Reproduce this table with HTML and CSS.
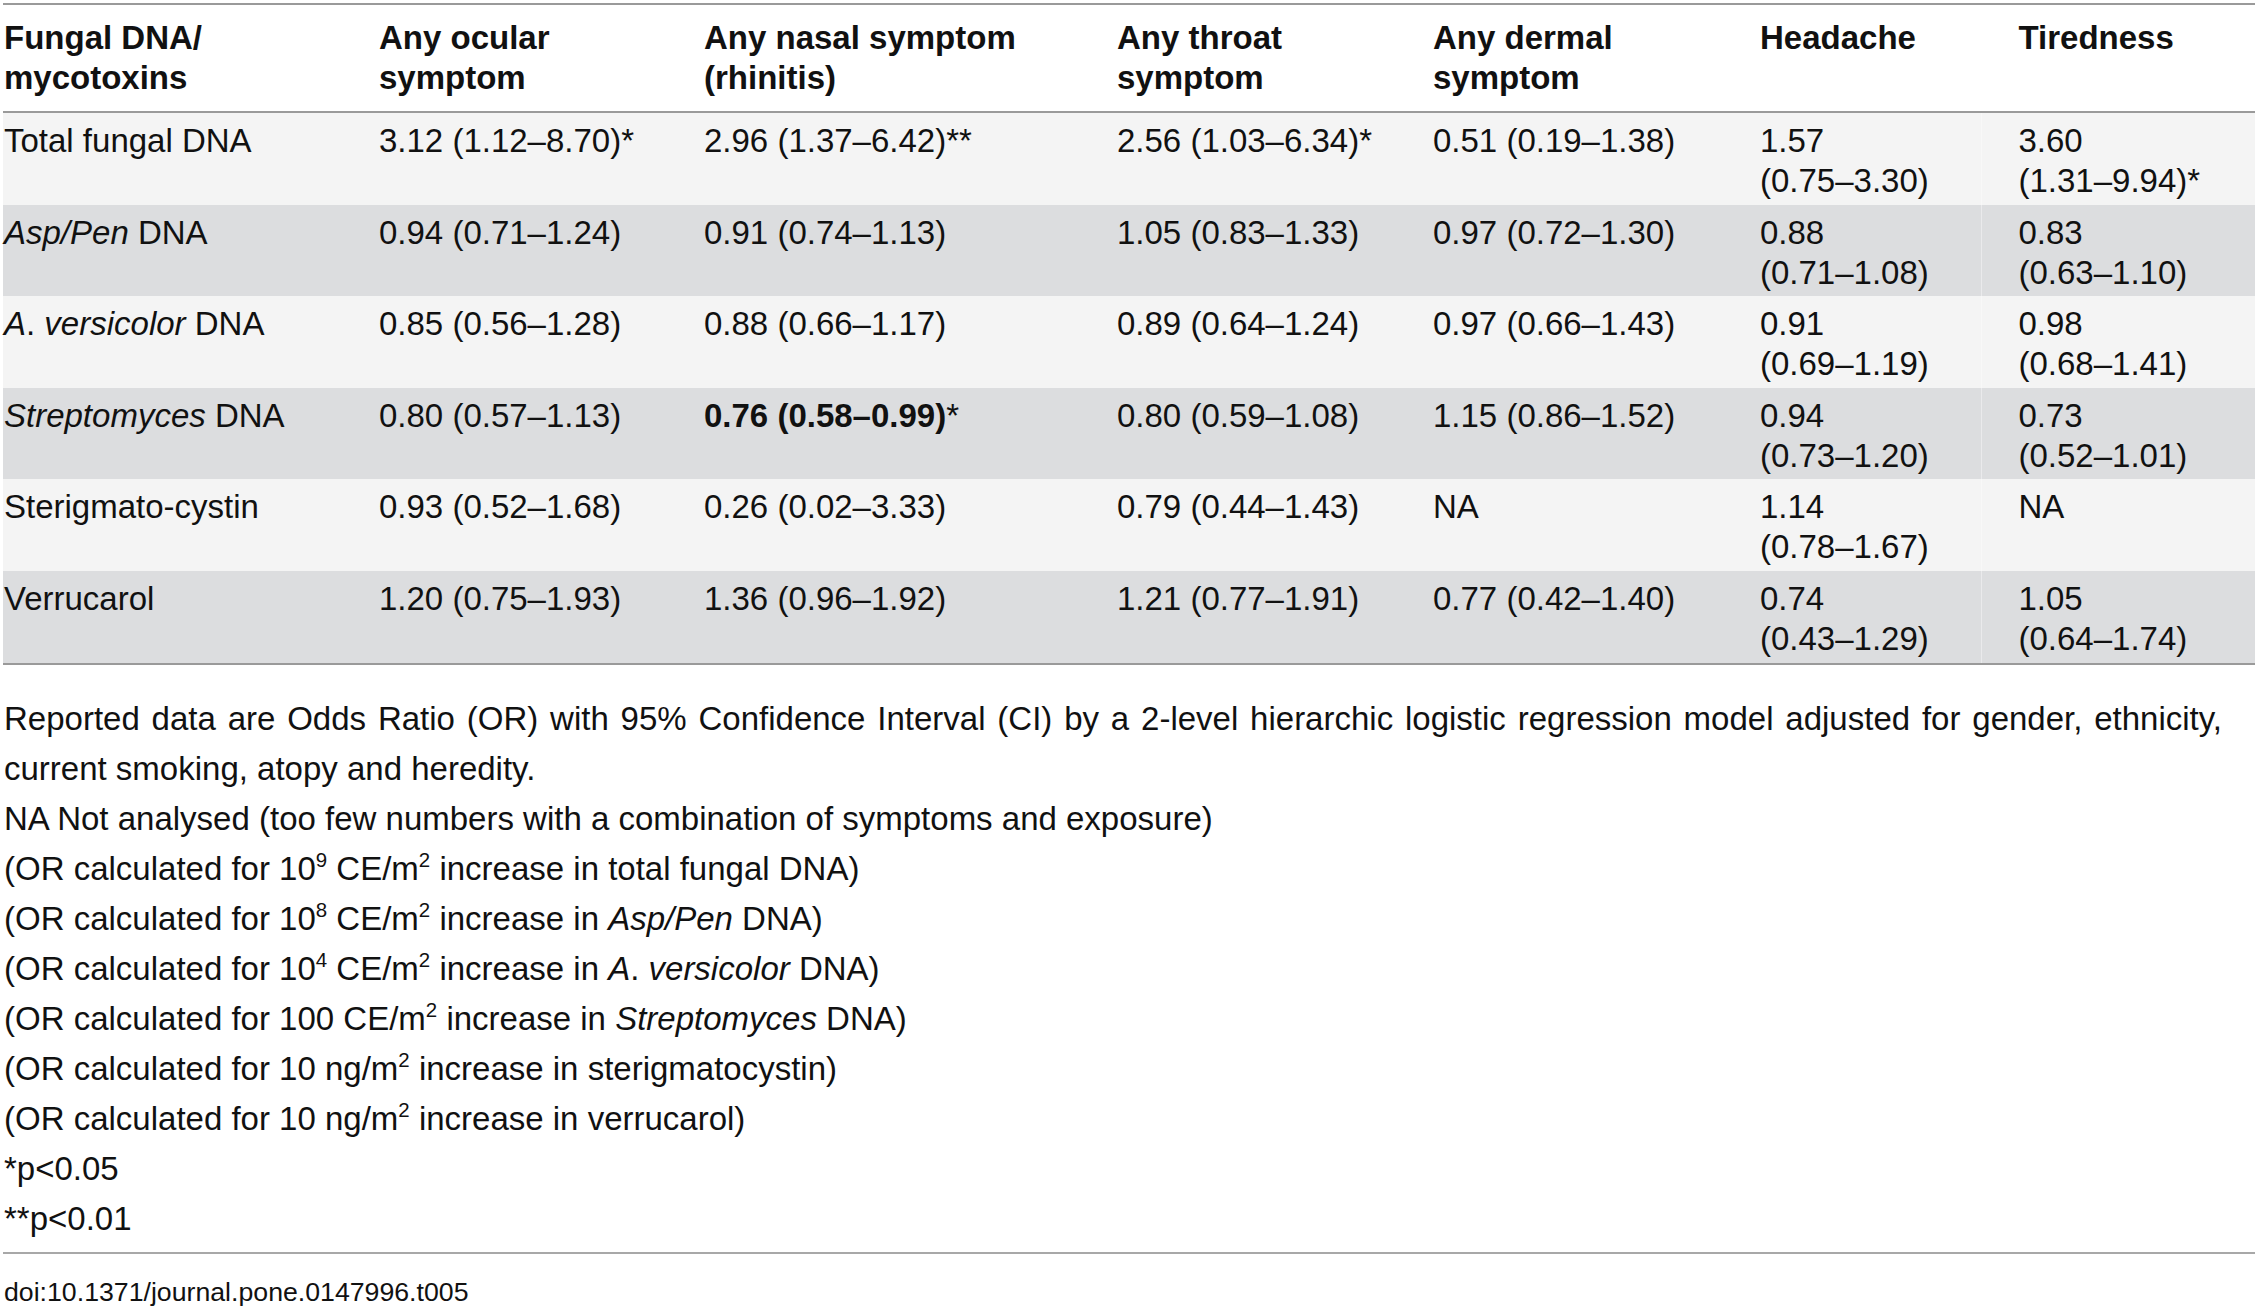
FILE: index.html
```html
<!DOCTYPE html>
<html lang="en">
<head>
<meta charset="utf-8">
<title>Table 5</title>
<link rel="stylesheet" href="styles.css">
</head>
<body>
<div class="page">
  <table class="data">
    <colgroup>
      <col class="c1"><col class="c2"><col class="c3"><col class="c4"><col class="c5"><col class="c6"><col class="c7">
    </colgroup>
    <thead>
      <tr>
        <th>Fungal DNA/<br>mycotoxins</th>
        <th>Any ocular<br>symptom</th>
        <th>Any nasal symptom<br>(rhinitis)</th>
        <th>Any throat<br>symptom</th>
        <th>Any dermal<br>symptom</th>
        <th>Headache</th>
        <th class="last">Tiredness</th>
      </tr>
    </thead>
    <tbody>
      <tr class="light">
        <td>Total fungal DNA</td>
        <td>3.12 <span class="ci">(1.12–8.70)*</span></td>
        <td>2.96 <span class="ci">(1.37–6.42)**</span></td>
        <td>2.56 <span class="ci">(1.03–6.34)*</span></td>
        <td>0.51 <span class="ci">(0.19–1.38)</span></td>
        <td>1.57 <span class="ci">(0.75–3.30)</span></td>
        <td class="last">3.60 <span class="ci">(1.31–9.94)*</span></td>
      </tr>
      <tr class="dark">
        <td><i>Asp/Pen</i> DNA</td>
        <td>0.94 <span class="ci">(0.71–1.24)</span></td>
        <td>0.91 <span class="ci">(0.74–1.13)</span></td>
        <td>1.05 <span class="ci">(0.83–1.33)</span></td>
        <td>0.97 <span class="ci">(0.72–1.30)</span></td>
        <td>0.88 <span class="ci">(0.71–1.08)</span></td>
        <td class="last">0.83 <span class="ci">(0.63–1.10)</span></td>
      </tr>
      <tr class="light">
        <td><i>A</i>. <i>versicolor</i> DNA</td>
        <td>0.85 <span class="ci">(0.56–1.28)</span></td>
        <td>0.88 <span class="ci">(0.66–1.17)</span></td>
        <td>0.89 <span class="ci">(0.64–1.24)</span></td>
        <td>0.97 <span class="ci">(0.66–1.43)</span></td>
        <td>0.91 <span class="ci">(0.69–1.19)</span></td>
        <td class="last">0.98 <span class="ci">(0.68–1.41)</span></td>
      </tr>
      <tr class="dark">
        <td><i>Streptomyces</i> DNA</td>
        <td>0.80 <span class="ci">(0.57–1.13)</span></td>
        <td><b>0.76 <span class="ci">(0.58–0.99)</span></b>*</td>
        <td>0.80 <span class="ci">(0.59–1.08)</span></td>
        <td>1.15 <span class="ci">(0.86–1.52)</span></td>
        <td>0.94 <span class="ci">(0.73–1.20)</span></td>
        <td class="last">0.73 <span class="ci">(0.52–1.01)</span></td>
      </tr>
      <tr class="light">
        <td>Sterigmato-cystin</td>
        <td>0.93 <span class="ci">(0.52–1.68)</span></td>
        <td>0.26 <span class="ci">(0.02–3.33)</span></td>
        <td>0.79 <span class="ci">(0.44–1.43)</span></td>
        <td>NA</td>
        <td>1.14 <span class="ci">(0.78–1.67)</span></td>
        <td class="last">NA</td>
      </tr>
      <tr class="dark">
        <td>Verrucarol</td>
        <td>1.20 <span class="ci">(0.75–1.93)</span></td>
        <td>1.36 <span class="ci">(0.96–1.92)</span></td>
        <td>1.21 <span class="ci">(0.77–1.91)</span></td>
        <td>0.77 <span class="ci">(0.42–1.40)</span></td>
        <td>0.74 <span class="ci">(0.43–1.29)</span></td>
        <td class="last">1.05 <span class="ci">(0.64–1.74)</span></td>
      </tr>
    </tbody>
  </table>

  <div class="notes">
    <p>Reported data are Odds Ratio (OR) with 95% Confidence Interval (CI) by a 2-level hierarchic logistic regression model adjusted for gender, ethnicity, current smoking, atopy and heredity.</p>
    <p>NA Not analysed (too few numbers with a combination of symptoms and exposure)</p>
    <p>(OR calculated for 10<sup>9</sup> CE/m<sup>2</sup> increase in total fungal DNA)</p>
    <p>(OR calculated for 10<sup>8</sup> CE/m<sup>2</sup> increase in <i>Asp/Pen</i> DNA)</p>
    <p>(OR calculated for 10<sup>4</sup> CE/m<sup>2</sup> increase in <i>A</i>. <i>versicolor</i> DNA)</p>
    <p>(OR calculated for 100 CE/m<sup>2</sup> increase in <i>Streptomyces</i> DNA)</p>
    <p>(OR calculated for 10 ng/m<sup>2</sup> increase in sterigmatocystin)</p>
    <p>(OR calculated for 10 ng/m<sup>2</sup> increase in verrucarol)</p>
    <p>*p&lt;0.05</p>
    <p>**p&lt;0.01</p>
  </div>

  <div class="doi">doi:10.1371/journal.pone.0147996.t005</div>
</div>
</body>
</html>
```

FILE: styles.css
```css
html, body {
  margin: 0;
  padding: 0;
  background: #ffffff;
}

body {
  font-family: "Liberation Sans", Arial, Helvetica, sans-serif;
  color: #111111;
}

.page {
  padding: 3px 2px 0 3px;
}

.data {
  width: 2252px;
  border-collapse: collapse;
  table-layout: fixed;
  font-size: 33px;
  line-height: 40px;
  border-top: 2px solid #9a9a9a;
  border-bottom: 2px solid #9a9a9a;
}

.c1 { width: 376px; }
.c2 { width: 325px; }
.c3 { width: 413px; }
.c4 { width: 316px; }
.c5 { width: 327px; }
.c6 { width: 221px; }
.c7 { width: 274px; }

.data th {
  text-align: left;
  vertical-align: top;
  font-weight: bold;
  padding: 13px 0 13px 0;
  background: #ffffff;
  border-bottom: 2px solid #9a9a9a;
}

.data td {
  text-align: left;
  vertical-align: top;
  padding: 8px 16px 3.6px 0;
}

.data .ci {
  white-space: nowrap;
}

.data th:first-child,
.data td:first-child {
  padding-left: 1px;
}

.data .last {
  padding-left: 37px;
  border-left: 1px solid rgba(255, 255, 255, 0.4);
}

.data tr.light td { background: #f4f4f4; }
.data tr.dark td { background: #dcdddf; }

.notes {
  margin-top: 29px;
  width: 2218px;
  font-size: 33px;
  line-height: 50px;
  padding-left: 1px;
  text-align: justify;
}

.notes p {
  margin: 0;
}

.notes sup {
  font-size: 0.62em;
  line-height: 0;
  vertical-align: 0.62em;
}

.doi {
  margin-top: 8px;
  border-top: 2px solid #a8a8a8;
  padding-top: 22px;
  font-size: 26.7px;
  line-height: 32px;
  padding-left: 1px;
}
```
